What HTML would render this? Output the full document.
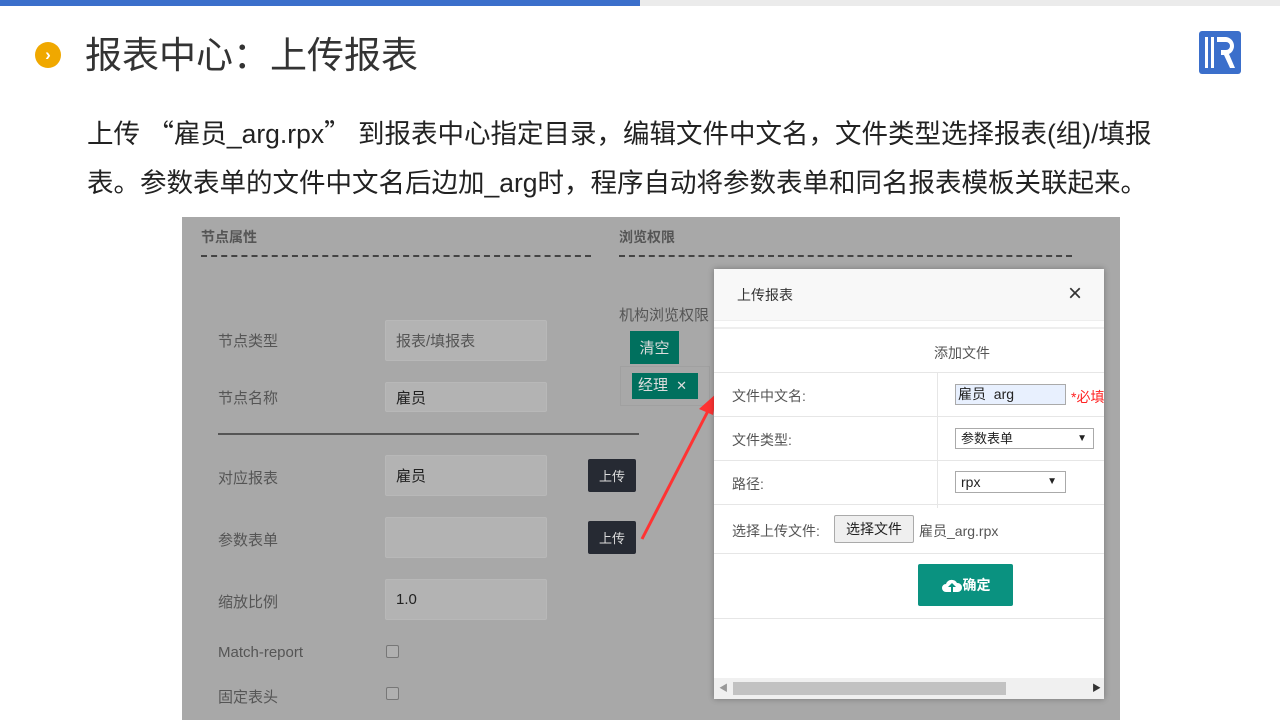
<!DOCTYPE html>
<html><head><meta charset="utf-8"><style>
*{margin:0;padding:0;box-sizing:border-box}
body{width:1280px;height:720px;overflow:hidden;background:#fff;position:relative;font-family:"Liberation Sans","Noto Sans CJK SC",sans-serif}
.a{position:absolute;white-space:nowrap}
.t{color:#555;font-size:15px}
.in{position:absolute;background:#b3b3b3;border:1px solid #b8b8b8;border-radius:2px;font-size:15px;color:#222;padding-left:10px;display:flex;align-items:center}
.bt{position:absolute;background:#262a33;color:#ddd;font-size:13px;width:48px;height:33px;border-radius:2px;display:flex;align-items:center;justify-content:center}
.cb{position:absolute;width:13px;height:13px;border:1px solid #777;border-radius:2px;background:#b0b0b0}
.row{position:absolute;left:0;width:390px;border-top:1px solid #e6e6e6}
.m{color:#555;font-size:14px}
</style></head><body>
<div class="a" style="left:0;top:0;width:640px;height:6px;background:#3b6fcb"></div>
<div class="a" style="left:640px;top:0;width:640px;height:6px;background:#ebebeb"></div>
<div class="a" style="left:35px;top:42px;width:26px;height:26px;border-radius:50%;background:#f0a800;color:#fff;font-size:17px;font-weight:bold;text-align:center;line-height:26px">›</div>
<div class="a" style="left:85px;top:33px;font-size:37px;color:#333;line-height:46px">报表中心：上传报表</div>
<svg class="a" style="left:1199px;top:31px" width="42" height="43" viewBox="0 0 42 43"><rect width="42" height="43" rx="3" fill="#3b6fcb"/><rect x="6" y="6" width="3" height="31" fill="#fff"/><rect x="12" y="6" width="3" height="31" fill="#fff"/><path d="M18 6h9a9 9 0 0 1 3 17l6 14h-5l-6-13h-3v-5h5a4 4 0 0 0 0-8h-9z" fill="#fff"/></svg>
<div class="a" style="left:87px;top:107px;font-size:26.5px;color:#222;line-height:49px;width:1150px">上传 <span style="font-family:'Noto Sans CJK SC',sans-serif">“</span>雇员_arg.rpx<span style="font-family:'Noto Sans CJK SC',sans-serif">”</span> 到报表中心指定目录，编辑文件中文名，文件类型选择报表(组)/填报<br>表。参数表单的文件中文名后边加_arg时，程序自动将参数表单和同名报表模板关联起来。</div>

<div class="a" style="left:182px;top:217px;width:938px;height:503px;background:#a8a8a8;overflow:hidden">
<div class="a t" style="left:19px;top:10px;font-weight:bold;font-size:14px">节点属性</div>
<div class="a" style="left:19px;top:38px;width:390px;border-top:2px dashed #444"></div>
<div class="a t" style="left:437px;top:10px;font-weight:bold;font-size:14px">浏览权限</div>
<div class="a" style="left:437px;top:38px;width:453px;border-top:2px dashed #444"></div>
<div class="a t" style="left:36px;top:113px">节点类型</div>
<div class="in" style="left:203px;top:103px;width:162px;height:41px;color:#555">报表/填报表</div>
<div class="a t" style="left:36px;top:170px">节点名称</div>
<div class="in" style="left:203px;top:165px;width:162px;height:30px">雇员</div>
<div class="a" style="left:36px;top:216px;width:421px;border-top:2px solid #555"></div>
<div class="a t" style="left:36px;top:250px">对应报表</div>
<div class="in" style="left:203px;top:238px;width:162px;height:41px">雇员</div>
<div class="bt" style="left:406px;top:242px">上传</div>
<div class="a t" style="left:36px;top:312px">参数表单</div>
<div class="in" style="left:203px;top:300px;width:162px;height:41px"></div>
<div class="bt" style="left:406px;top:304px">上传</div>
<div class="a t" style="left:36px;top:374px">缩放比例</div>
<div class="in" style="left:203px;top:362px;width:162px;height:41px">1.0</div>
<div class="a t" style="left:36px;top:427px">Match-report</div>
<div class="cb" style="left:204px;top:428px"></div>
<div class="a t" style="left:36px;top:469px">固定表头</div>
<div class="cb" style="left:204px;top:470px"></div>
<div class="a t" style="left:437px;top:87px">机构浏览权限</div>
<div class="a" style="left:448px;top:114px;width:49px;height:33px;background:#00705e;color:#ddd;font-size:15px;display:flex;align-items:center;justify-content:center">清空</div>
<div class="a" style="left:438px;top:149px;width:90px;height:40px;border:1px solid #a0a0a0"></div>
<div class="a" style="left:450px;top:156px;width:66px;height:26px;background:#00705e;color:#ddd;font-size:15px;padding-left:6px;line-height:26px">经理 <span style="font-size:13px;margin-left:4px">✕</span></div>
<svg class="a" style="left:455px;top:170px" width="90" height="160"><path d="M5 152 L72 22" stroke="#f33" stroke-width="3"/><path d="M80 6 L62 22 L76 28 Z" fill="#f33"/></svg>
</div>

<div class="a" style="left:714px;top:269px;width:390px;height:430px;background:#fff;box-shadow:0 0 6px rgba(0,0,0,.3);overflow:hidden">
<div class="a" style="left:0;top:0;width:390px;height:52px;background:#f8f8f8;border-bottom:1px solid #eee"></div>
<div class="a m" style="left:23px;top:16px;color:#333">上传报表</div>
<div class="a" style="left:354px;top:11px;font-size:24px;color:#333">×</div>
<div class="a" style="left:0;top:58px;width:390px;border-top:2px solid #eee"></div>
<div class="a m" style="left:220px;top:74px">添加文件</div>
<div class="row" style="top:103px"></div>
<div class="a" style="left:223px;top:103px;height:136px;border-left:1px solid #e6e6e6"></div>
<div class="a m" style="left:18px;top:117px">文件中文名:</div>
<div class="a" style="left:241px;top:115px;width:111px;height:21px;background:#e8f0fe;border:1px solid #aaa;font-size:14px;padding-left:2px;line-height:19px;color:#222">雇员&nbsp; arg</div>
<div class="a" style="left:357px;top:118px;color:#f22;font-size:14px">*必填</div>
<div class="row" style="top:147px"></div>
<div class="a m" style="left:18px;top:161px">文件类型:</div>
<div class="a" style="left:241px;top:159px;width:139px;height:21px;border:1px solid #aaa;font-size:13px;padding-left:5px;line-height:20px;color:#222">参数表单<span style="position:absolute;right:6px;font-size:10px">▼</span></div>
<div class="row" style="top:191px"></div>
<div class="a m" style="left:18px;top:205px">路径:</div>
<div class="a" style="left:241px;top:202px;width:111px;height:22px;border:1px solid #aaa;font-size:14px;padding-left:5px;line-height:20px;color:#222">rpx<span style="position:absolute;right:8px;font-size:10px">▼</span></div>
<div class="row" style="top:235px"></div>
<div class="a m" style="left:18px;top:252px">选择上传文件:</div>
<div class="a" style="left:120px;top:246px;width:80px;height:28px;background:#efefef;border:1px solid #aaa;border-radius:2px;font-size:14px;text-align:center;line-height:26px;color:#222">选择文件</div>
<div class="a m" style="left:205px;top:252px">雇员_arg.rpx</div>
<div class="row" style="top:284px"></div>
<div class="a" style="left:204px;top:295px;width:95px;height:42px;background:#0a9280;border-radius:2px;color:#fff;font-size:14px;font-weight:bold;display:flex;align-items:center;justify-content:center"><svg width="22" height="16" viewBox="0 0 22 16"><path d="M5 15a4 4 0 0 1 0-8a6 6 0 0 1 11-1a4.5 4.5 0 0 1 1 9z" fill="#fff"/><path d="M11 6l-4 4h3v5h2v-5h3z" fill="#0a9280"/></svg>确定</div>
<div class="row" style="top:349px"></div>
<div class="a" style="left:0;top:409px;width:390px;height:21px;background:#f0f0f0"></div>
<div class="a" style="left:19px;top:413px;width:273px;height:13px;background:#c2c2c2"></div>
<div class="a" style="left:5px;top:412px;font-size:9px;color:#999">◀</div>
<div class="a" style="left:378px;top:412px;font-size:9px;color:#333">▶</div>
</div>
</body></html>
